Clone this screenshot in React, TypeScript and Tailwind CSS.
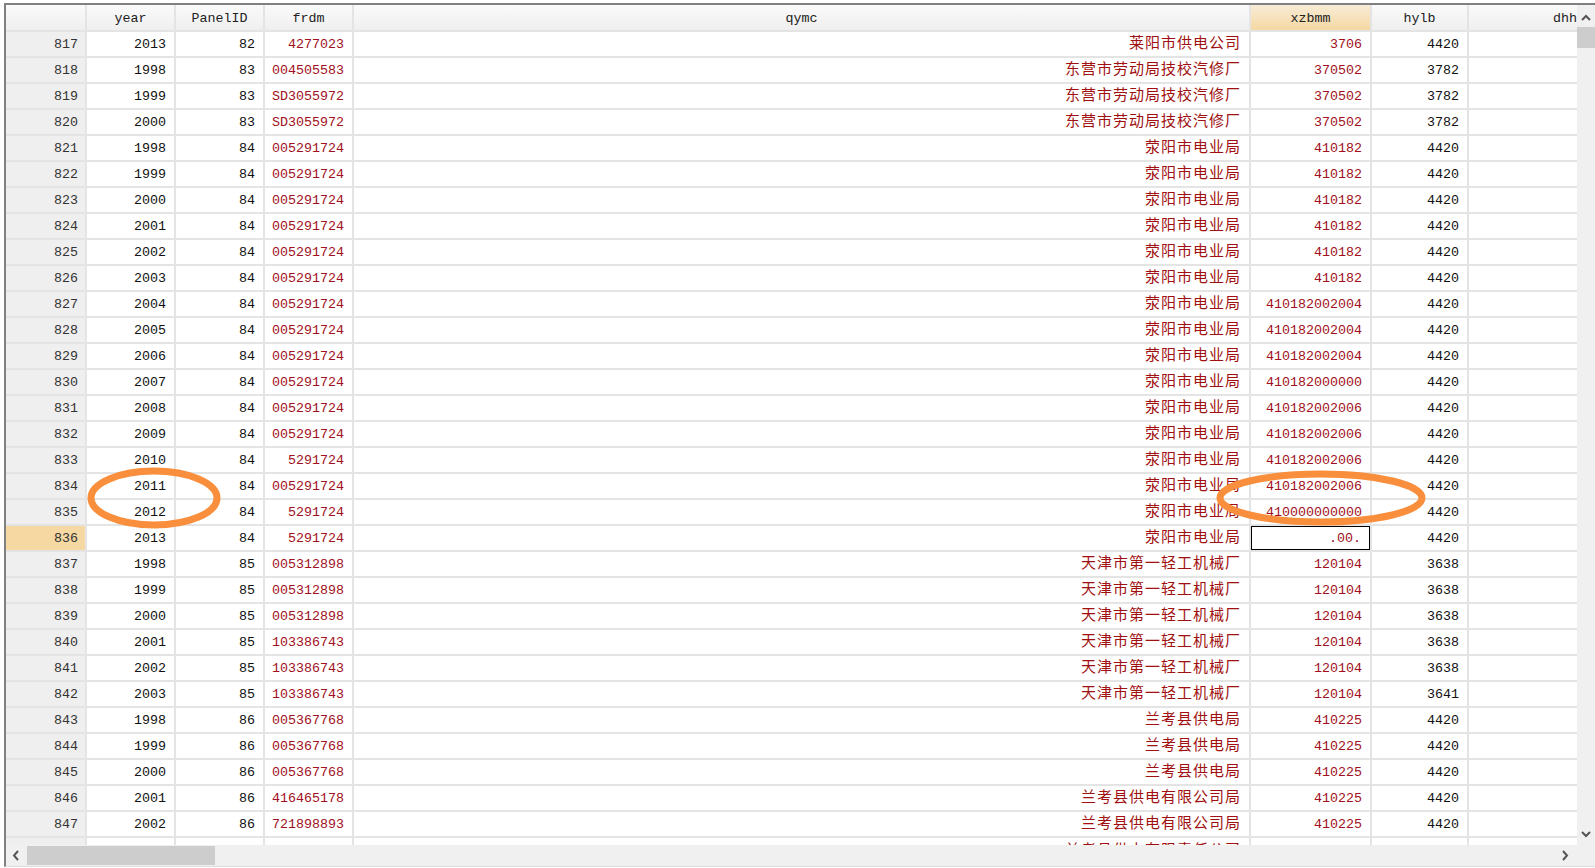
const mono = "font-['Liberation_Mono','Courier_New',monospace]"

const frdmA = '005291724'
const rows: [number, number, number, string, string, string, string][] = [
  [817, 2013, 82, '4277023', '莱阳市供电公司', '3706', '4420'],
  [818, 1998, 83, '004505583', '东营市劳动局技校汽修厂', '370502', '3782'],
  [819, 1999, 83, 'SD3055972', '东营市劳动局技校汽修厂', '370502', '3782'],
  [820, 2000, 83, 'SD3055972', '东营市劳动局技校汽修厂', '370502', '3782'],
  [821, 1998, 84, frdmA, '荥阳市电业局', '410182', '4420'],
  [822, 1999, 84, frdmA, '荥阳市电业局', '410182', '4420'],
  [823, 2000, 84, frdmA, '荥阳市电业局', '410182', '4420'],
  [824, 2001, 84, frdmA, '荥阳市电业局', '410182', '4420'],
  [825, 2002, 84, frdmA, '荥阳市电业局', '410182', '4420'],
  [826, 2003, 84, frdmA, '荥阳市电业局', '410182', '4420'],
  [827, 2004, 84, frdmA, '荥阳市电业局', '410182002004', '4420'],
  [828, 2005, 84, frdmA, '荥阳市电业局', '410182002004', '4420'],
  [829, 2006, 84, frdmA, '荥阳市电业局', '410182002004', '4420'],
  [830, 2007, 84, frdmA, '荥阳市电业局', '410182000000', '4420'],
  [831, 2008, 84, frdmA, '荥阳市电业局', '410182002006', '4420'],
  [832, 2009, 84, frdmA, '荥阳市电业局', '410182002006', '4420'],
  [833, 2010, 84, '5291724', '荥阳市电业局', '410182002006', '4420'],
  [834, 2011, 84, frdmA, '荥阳市电业局', '410182002006', '4420'],
  [835, 2012, 84, '5291724', '荥阳市电业局', '410000000000', '4420'],
  [836, 2013, 84, '5291724', '荥阳市电业局', '.00.', '4420'],
  [837, 1998, 85, '005312898', '天津市第一轻工机械厂', '120104', '3638'],
  [838, 1999, 85, '005312898', '天津市第一轻工机械厂', '120104', '3638'],
  [839, 2000, 85, '005312898', '天津市第一轻工机械厂', '120104', '3638'],
  [840, 2001, 85, '103386743', '天津市第一轻工机械厂', '120104', '3638'],
  [841, 2002, 85, '103386743', '天津市第一轻工机械厂', '120104', '3638'],
  [842, 2003, 85, '103386743', '天津市第一轻工机械厂', '120104', '3641'],
  [843, 1998, 86, '005367768', '兰考县供电局', '410225', '4420'],
  [844, 1999, 86, '005367768', '兰考县供电局', '410225', '4420'],
  [845, 2000, 86, '005367768', '兰考县供电局', '410225', '4420'],
  [846, 2001, 86, '416465178', '兰考县供电有限公司局', '410225', '4420'],
  [847, 2002, 86, '721898893', '兰考县供电有限公司局', '410225', '4420'],
]

function Head({ w, children, active }: { w: string; children?: React.ReactNode; active?: boolean }) {
  return (
    <div className={`${w} shrink-0 h-full flex items-center justify-center pt-[2px] border-r-2 border-[#e4e4e4] text-[13.33px] text-[#222] ${active ? 'bg-gradient-to-b from-[#f8ecd6] to-[#f5d8a2]' : ''}`}>
      {children}
    </div>
  )
}

function Row({ r }: { r: (typeof rows)[number] }) {
  const selected = r[0] === 836
  const cell = 'shrink-0 h-full flex items-center justify-end pt-[2px] pr-[8px] border-r-2 border-[#e4e4e4]'
  return (
    <div className="h-[26px] shrink-0 flex border-b-2 border-[#e4e4e4] text-[13.33px]">
      <div className={`w-[81px] shrink-0 flex items-center justify-end pt-[2px] pr-[7px] border-r-2 border-[#e4e4e4] text-[#333] ${selected ? 'bg-[#f5d8a2]' : 'bg-[#efefef]'}`}>{r[0]}</div>
      <div className={`${cell} w-[89px] text-[#111]`}>{r[1]}</div>
      <div className={`${cell} w-[89px] text-[#111]`}>{r[2]}</div>
      <div className={`${cell} w-[89px] text-[#a01020]`}>{r[3]}</div>
      <div className="w-[897px] shrink-0 h-full flex items-center justify-end pb-[4px] pr-[8px] border-r-2 border-[#e4e4e4] text-[#a01010] text-[15px] font-['Noto_Sans_CJK_SC',sans-serif] tracking-[1px]">{r[4]}</div>
      {selected ? (
        <div className="w-[121px] shrink-0 h-full border-r-2 border-[#e4e4e4]">
          <div className="h-full flex items-center justify-end pt-[2px] pr-[8px] border border-black text-[#a01020]">{r[5]}</div>
        </div>
      ) : (
        <div className={`${cell} w-[121px] text-[#a01020]`}>{r[5]}</div>
      )}
      <div className={`${cell} w-[97px] text-[#111]`}>{r[6]}</div>
      <div className="flex-1" />
    </div>
  )
}

export default function App() {
  return (
    <div className={`relative w-[1595px] h-[868px] overflow-hidden bg-white pt-[3px] pl-[4px] ${mono}`}>
      <div className="h-[864px] flex flex-col border-t-2 border-l-2 border-[#808080] border-b border-b-[#dcdcdc]">
        <div className="flex-1 min-h-0 flex">
          <div className="w-[1571px] flex flex-col overflow-hidden">
            <div className="h-[27px] shrink-0 flex border-b-2 border-[#e4e4e4] bg-gradient-to-b from-[#fafafa] to-[#efefef]">
              <Head w="w-[81px]" />
              <Head w="w-[89px]">year</Head>
              <Head w="w-[89px]">PanelID</Head>
              <Head w="w-[89px]">frdm</Head>
              <Head w="w-[897px]">qymc</Head>
              <Head w="w-[121px]" active>xzbmm</Head>
              <Head w="w-[97px]">hylb</Head>
              <div className="flex-1 pt-[2px] text-[13.33px] text-[#222] flex items-center justify-end">dhh</div>
            </div>
            {rows.map(r => <Row key={r[0]} r={r} />)}
            <div className="h-[26px] shrink-0 flex text-[13.33px]">
              <div className="w-[81px] shrink-0 bg-[#efefef] border-r-2 border-[#e4e4e4]" />
              <div className="w-[89px] shrink-0 border-r-2 border-[#e4e4e4]" />
              <div className="w-[89px] shrink-0 border-r-2 border-[#e4e4e4]" />
              <div className="w-[89px] shrink-0 border-r-2 border-[#e4e4e4]" />
              <div className="w-[897px] shrink-0 border-r-2 border-[#e4e4e4] flex items-center justify-end pb-[4px] pr-[8px] text-[#a01010] text-[15px] font-['Noto_Sans_CJK_SC',sans-serif] tracking-[1px]">兰考县供电有限责任公司</div>
              <div className="w-[121px] shrink-0 border-r-2 border-[#e4e4e4]" />
              <div className="w-[97px] shrink-0 border-r-2 border-[#e4e4e4]" />
            </div>
          </div>
          <div className="flex-1 bg-[#f0f0f0] flex flex-col items-center">
            <svg className="mt-[9px] shrink-0" width="10" height="7" viewBox="0 0 10 7"><path d="M1 6l4-4 4 4" fill="none" stroke="#555" strokeWidth="2" /></svg>
            <div className="mt-[6px] w-full h-[21px] bg-[#cdcdcd]" />
            <div className="flex-1" />
            <svg className="mb-[7px] shrink-0" width="10" height="7" viewBox="0 0 10 7"><path d="M1 1l4 4 4-4" fill="none" stroke="#555" strokeWidth="2" /></svg>
          </div>
        </div>
        <div className="h-[21px] shrink-0 bg-[#f0f0f0] flex items-center pl-[6px] pr-[10px]">
          <svg className="shrink-0" width="8" height="11" viewBox="0 0 8 11"><path d="M6 1L2 5.5 6 10" fill="none" stroke="#555" strokeWidth="2" /></svg>
          <div className="ml-[7px] w-[188px] h-[19px] bg-[#cdcdcd]" />
          <div className="flex-1" />
          <svg className="mr-[16px] shrink-0" width="8" height="11" viewBox="0 0 8 11"><path d="M2 1l4 4.5L2 10" fill="none" stroke="#555" strokeWidth="2" /></svg>
        </div>
      </div>
      <svg className="absolute left-0 top-0 pointer-events-none" width="1595" height="868" viewBox="0 0 1595 868">
        <ellipse cx="154" cy="498" rx="63" ry="27" fill="none" stroke="#f98f3c" strokeWidth="7" />
        <ellipse cx="1321" cy="498" rx="101" ry="24" fill="none" stroke="#f98f3c" strokeWidth="7" />
      </svg>
    </div>
  )
}
